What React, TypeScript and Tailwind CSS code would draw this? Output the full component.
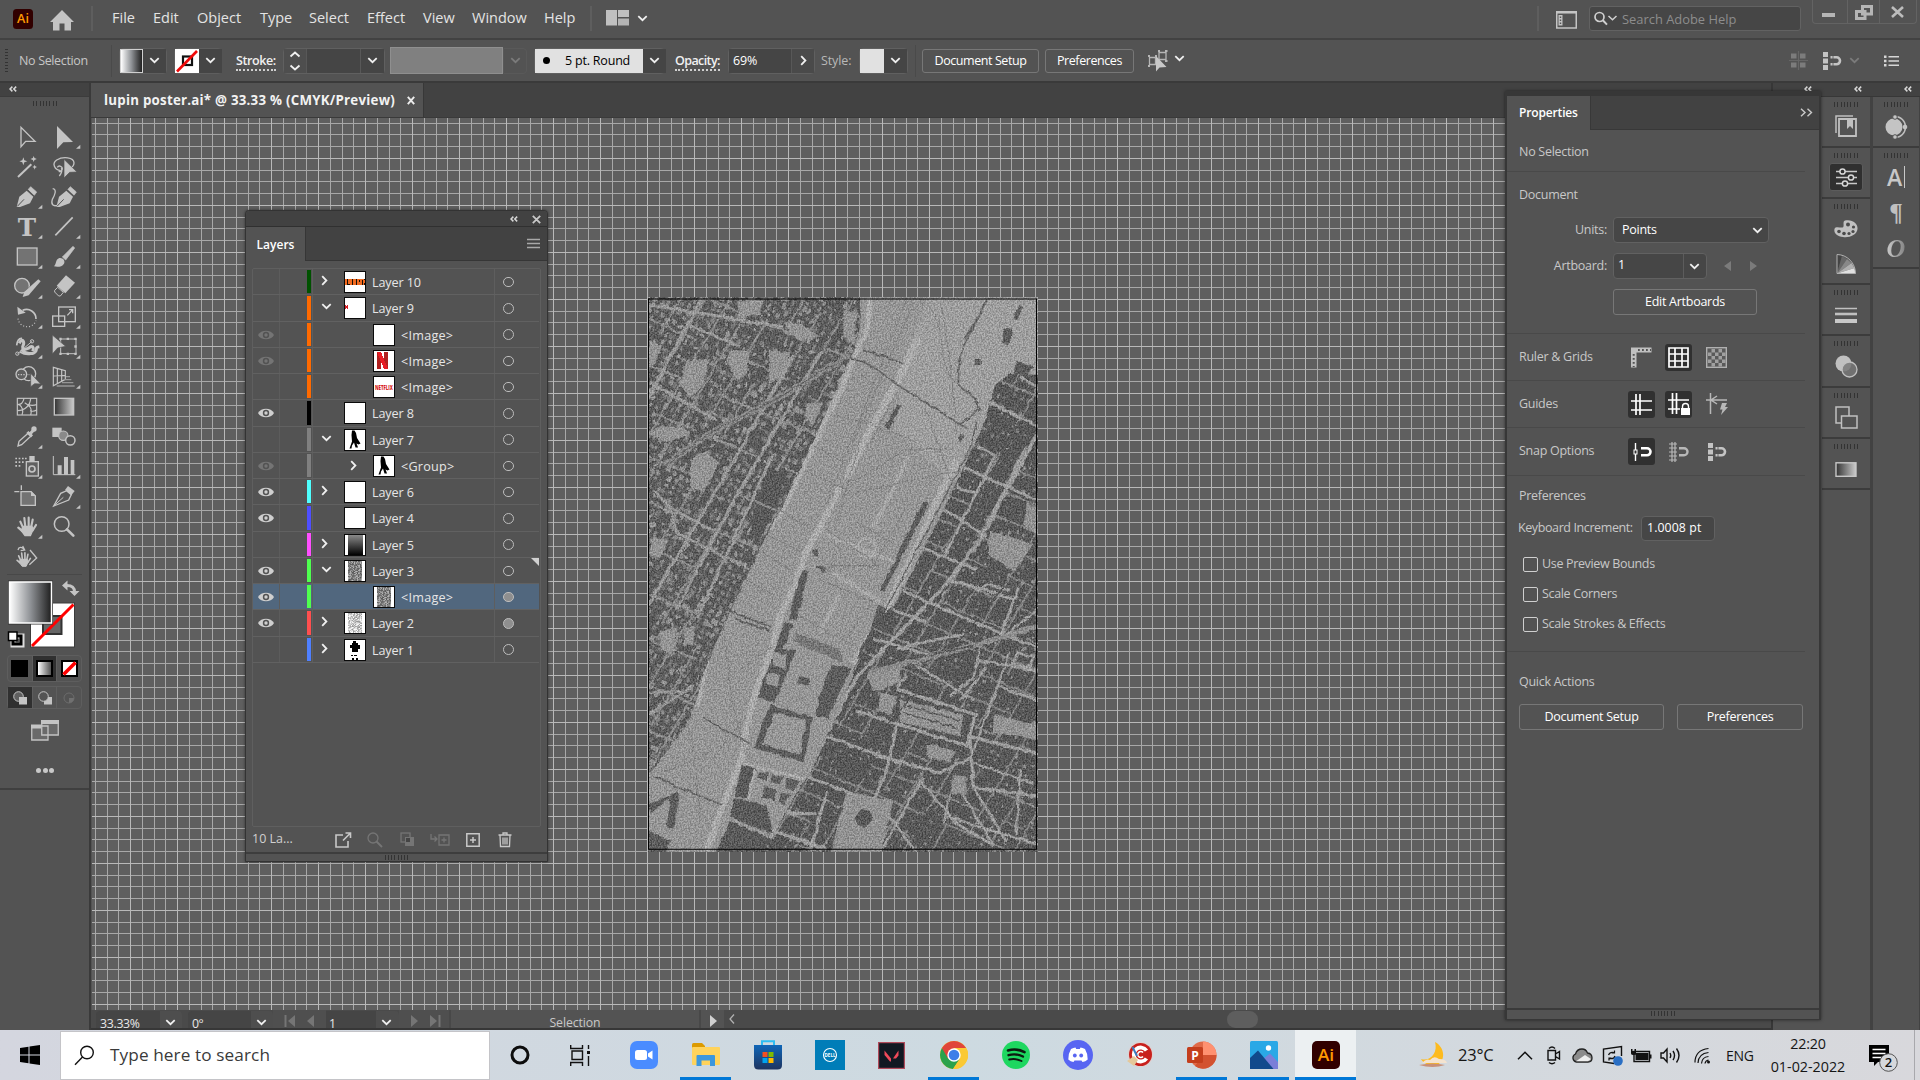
import React from 'react';

type Kids = { children?: React.ReactNode };

const UI = 'font-["Open_Sans","Noto_Sans",sans-serif]';

/* ---------- small shared pieces ---------- */

function Chev({ dim, className = '' }: { dim?: boolean; className?: string }) {
  return (
    <svg width="11" height="7" viewBox="0 0 11 7" className={`shrink-0 ${className}`}>
      <path d="M1.3 1.2 5.5 5.2 9.7 1.2" fill="none" stroke={dim ? '#7b7b7b' : '#f0f0f0'} strokeWidth="1.8" />
    </svg>
  );
}

function ChevRight({ className = '' }: { className?: string }) {
  return (
    <svg width="7" height="11" viewBox="0 0 7 11" className={`shrink-0 ${className}`}>
      <path d="M1.2 1.2 5.4 5.5 1.2 9.8" fill="none" stroke="#f0f0f0" strokeWidth="1.8" />
    </svg>
  );
}

function Grip({ n = 8 }: { n?: number }) {
  return (
    <div className="flex h-[5px] w-6 shrink-0 justify-between">
      {Array.from({ length: n }).map((_, i) => (
        <span key={i} className="w-px bg-[#333]" />
      ))}
    </div>
  );
}

function DoubleLeft({ className = '' }: { className?: string }) {
  return (
    <svg width="8" height="6" viewBox="0 0 8 6" className={className}>
      <path d="M3.400 .6 1 3l2.400 2.400M7.200 .6 4.800 3l2.400 2.400" fill="none" stroke="#d8d8d8" strokeWidth="1.500" />
    </svg>
  );
}

function DropBox({ dim }: { dim?: boolean }) {
  return (
    <div className={`flex h-full w-[23px] shrink-0 items-center justify-center ${dim ? '' : 'bg-[#454545]'}`}>
      <Chev dim={dim} />
    </div>
  );
}

function AiLogo({ size }: { size: number }) {
  return (
    <svg width={size} height={size} viewBox="0 0 28 28">
      <rect width="28" height="28" rx="5" fill="#310000" />
      <text x="14" y="20" textAnchor="middle" fontFamily="Open Sans" fontWeight="600" fontSize="17" textLength="16.500" lengthAdjust="spacingAndGlyphs" fill="#ff9a00">Ai</text>
    </svg>
  );
}

/* ---------- menu bar ---------- */

const menus: [string, string][] = [
  ['File', 'w-[41px]'], ['Edit', 'w-[44px]'], ['Object', 'w-[63px]'], ['Type', 'w-[49px]'], ['Select', 'w-[58px]'],
  ['Effect', 'w-[56px]'], ['View', 'w-[49px]'], ['Window', 'w-[72px]'], ['Help', 'w-[46px]'],
];

function MenuBar() {
  return (
    <header className="flex h-[38px] shrink-0 items-start bg-[#535353]">
      <div className="ml-[13px] mt-[9px]"><AiLogo size={20} /></div>
      <svg width="24" height="21" viewBox="0 0 24 21" className="ml-[17px] mt-[10px]">
        <path d="M12 0 24 12H21V20.500H14.500V13.500H9.500V20.500H3V12H0Z" fill="#c4c4c4" />
      </svg>
      <div className="ml-[17px] mt-1.5 h-[25px] w-[2px] bg-[#5e5e5e]" />
      <nav className="ml-[19px] mt-[7px] flex text-[14.500px] leading-[22px] text-[#e4e4e4]">
        {menus.map(([m, w]) => <span key={m} className={`${w} whitespace-nowrap`}>{m}</span>)}
      </nav>
      <div className="mt-1.5 h-[25px] w-[2px] bg-[#5e5e5e]" />
      <svg width="23" height="16" viewBox="0 0 23 16" className="ml-[14px] mt-[10px]">
        <rect width="11" height="15.500" fill="#c0c0c0" /><rect x="12" width="11" height="7" fill="#c0c0c0" /><rect x="12" y="8.500" width="11" height="7" fill="#b4b4b4" />
      </svg>
      <Chev className="ml-[8px] mt-[15px]" />
      <div className="grow" />
      <div className="mt-1.5 h-[25px] w-[2px] bg-[#5e5e5e]" />
      <svg width="21" height="18" viewBox="0 0 21 18" className="ml-[17px] mt-[11px]">
        <path d="M.75 1.500H20.250V17H.75Z" fill="none" stroke="#c4c4c4" strokeWidth="1.500" /><path d="M0 1.200H21" stroke="#c4c4c4" strokeWidth="2.400" />
        <rect x="2.500" y="4" width="4" height="10.500" fill="#c4c4c4" /><path d="M4.500 5.500v7.500" stroke="#555" strokeWidth="1.400" strokeDasharray="1.500 1.500" />
      </svg>
      <div className="ml-3 mt-1.5 flex h-[25px] w-[212px] items-center rounded-[3px] border border-[#626262] bg-[#464646] pl-1">
        <svg width="24" height="16" viewBox="0 0 24 16">
          <circle cx="5.500" cy="6" r="4.500" fill="none" stroke="#cfcfcf" strokeWidth="1.700" /><path d="M8.800 9.300 13 13.600" stroke="#cfcfcf" strokeWidth="2" />
          <path d="M14.500 5l4 3.700L22.500 5" fill="none" stroke="#cfcfcf" strokeWidth="1.500" />
        </svg>
        <span className="ml-[4px] pt-[2px] text-[12.900px] text-[#8d8d8d]">Search Adobe Help</span>
      </div>
      <div className="ml-[11px] mr-[3px] flex h-6 w-[105px] divide-x divide-[#636363] rounded-b border border-t-0 border-[#636363]">
        <div className="flex-1 pl-[9px] pt-[13px]"><div className="h-1 w-[13px] bg-[#b5b5b5]" /></div>
        <div className="flex-1 pl-[7px] pt-[5px]">
          <svg width="18" height="15" viewBox="0 0 18 15"><path d="M7.500 1.500h9v7.500h-9zM1.500 6.500h8.500v7H1.500z" fill="#535353" stroke="#b5b5b5" strokeWidth="3" /></svg>
        </div>
        <div className="flex-1 pl-[11px] pt-[6px]">
          <svg width="13" height="12" viewBox="0 0 13 12"><path d="M1 1 12 11M12 1 1 11" stroke="#bdbdbd" strokeWidth="2.600" /></svg>
        </div>
      </div>
    </header>
  );
}

/* ---------- control bar ---------- */

function ControlBar() {
  return (
    <div className="flex h-[43px] shrink-0 items-center border-t-2 border-[#424242] bg-[#535353] text-[12.500px]">
      <div className="ml-[5px] flex h-6 w-[3px] flex-col justify-between">{Array.from({ length: 8 }).map((_, i) => <span key={i} className="h-px bg-[#333]" />)}</div>
      <span className="ml-[11px] w-[92px] whitespace-nowrap pt-[2px] tracking-[-0.35px] text-[#c6c6c6]">No Selection</span>
      <div className="h-8 w-px bg-[#4a4a4a]" />
      <div className="ml-[7px] flex h-[26px] w-[48px] rounded border border-[#5e5e5e]">
        <div className="w-[25px] border border-[#d0d0d0] bg-linear-to-r from-white via-[#8f9296] to-[#222]" /><DropBox />
      </div>
      <div className="ml-[7px] flex h-[26px] w-[48px] rounded border border-[#5e5e5e]">
        <svg width="24" height="24" viewBox="0 0 24 24" className="shrink-0">
          <rect width="24" height="24" fill="#fff" /><rect x="8" y="7.500" width="9" height="8.500" fill="none" stroke="#111" strokeWidth="2.200" /><path d="M2 22.500 22 2" stroke="#f00a0a" strokeWidth="2.600" />
        </svg><DropBox />
      </div>
      <span className="ml-[14px] w-[47px] pt-[2px] tracking-[-0.4px]"><span className="border-b-2 border-dotted border-[#d0d0d0] font-semibold leading-none text-[#f0f0f0]">Stroke:</span></span>
      <div className="flex h-[26px] w-[102px] rounded border border-[#606060]">
        <svg width="22" height="24" viewBox="0 0 22 24" className="shrink-0 bg-[#4e4e4e]"><path d="M6.500 7.500 11 3.500l4.500 4M6.500 16.500 11 20.500l4.500-4" fill="none" stroke="#f0f0f0" strokeWidth="1.800" /></svg>
        <div className="w-[56px] border-x border-[#585858] bg-[#454545]" /><DropBox />
      </div>
      <div className="ml-[5px] h-[27px] w-[113px] border border-[#8f8f8f] bg-[#808080]" />
      <div className="flex h-[26px] w-6 items-center justify-center rounded-r border border-[#595959]"><Chev dim /></div>
      <div className="ml-[7px] flex h-[26px] w-[131px] rounded border border-[#606060]">
        <div className="flex w-[108px] shrink-0 items-center bg-[#e1e1e1] text-black"><span className="ml-[8px] size-[7px] rounded-full bg-black" /><span className="ml-[15px] whitespace-nowrap pt-[2px] tracking-[-0.2px]">5 pt. Round</span></div><DropBox />
      </div>
      <span className="ml-[10px] w-[53px] pt-[2px] tracking-[-0.6px]"><span className="border-b-2 border-dotted border-[#d0d0d0] font-semibold leading-none text-[#f0f0f0]">Opacity:</span></span>
      <div className="flex h-[26px] w-[87px] rounded border border-[#606060]">
        <div className="flex w-[63px] items-center border-r border-[#585858] bg-[#454545] pl-1 pt-[2px] tracking-[-0.2px] text-white">69%</div>
        <div className="flex w-[22px] items-center justify-center bg-[#4a4a4a]"><ChevRight /></div>
      </div>
      <span className="ml-[6px] w-[38px] pt-px tracking-[-0.1px] text-[#b8b8b8]">Style:</span>
      <div className="flex h-[26px] w-[49px] rounded border border-[#606060]"><div className="w-6 shrink-0 bg-[#e1e1e1]" /><DropBox /></div>
      <div className="ml-[7px] h-8 w-px bg-[#4a4a4a]" />
      <Button className="ml-[6px] h-6 w-[117px] pt-px tracking-[-0.42px]">Document Setup</Button>
      <Button className="ml-[6px] h-6 w-[89px] pt-px tracking-[-0.42px]">Preferences</Button>
      <svg width="22" height="22" viewBox="0 0 22 22" className="ml-[13px]">
        <path d="M2.500 7.500h6v7h-6zM12 2.500h7v7h-7z" fill="none" stroke="#b5b5b5" strokeWidth="1.300" />
        <path d="M1 6h2M1 16h2M8 6h2M11 1h2M18 1h2.500M18 11h2.500" stroke="#b5b5b5" strokeWidth="1.800" />
        <path d="M9 6V21.500L12.500 17.500 19.500 17Z" fill="#c8c8c8" />
      </svg>
      <Chev className="-mt-1 ml-[5px]" />
      <div className="grow" />
      <svg width="19" height="19" viewBox="0 0 19 19"><path d="M9.500 0v19M0 9.500h19" stroke="#666" strokeWidth="1.200" /><g fill="#7c7c7c"><rect x="2" y="2.500" width="5.500" height="5" /><rect x="11" y="2.500" width="5.500" height="5" /><rect x="2" y="11.500" width="5.500" height="5" /><rect x="11" y="11.500" width="5.500" height="5" /></g></svg>
      <MagnetDots className="ml-[14px]" />
      <Chev dim className="ml-[7px]" />
      <svg width="15" height="12" viewBox="0 0 15 12" className="ml-[24px] mr-[21px]"><g stroke="#d6d6d6"><path d="M4.500 1.800H15M4.500 6H15M4.500 10.200H15" strokeWidth="1.500" /><path d="M0 1.800h2.500M0 6h2.500M0 10.200h2.500" strokeWidth="2.600" /></g></svg>
    </div>
  );
}

function Button({ children, className = '' }: Kids & { className?: string }) {
  return <button className={`flex items-center justify-center whitespace-nowrap rounded-[3px] border border-[#777] font-medium text-white ${className}`}>{children}</button>;
}

function MagnetDots({ className = '' }: { className?: string }) {
  return (
    <svg width="20" height="20" viewBox="0 0 20 20" className={className}>
      <g fill="#c4c4c4"><rect x="1" y="1" width="5" height="5" /><rect x="1" y="7.500" width="5" height="5" /><rect x="1" y="14" width="5" height="5" /></g>
      <path d="M8.500 6.300H14.500a3.500 3.500 0 0 1 0 7H8.500" fill="none" stroke="#c4c4c4" strokeWidth="2.600" /><path d="M11 4.500v3.500M11 12v3.500" stroke="#535353" strokeWidth=".8" />
    </svg>
  );
}

/* ---------- tools ---------- */

const C = '#c4c4c4';
const D = '#535353';
const line = { fill: 'none', stroke: C, strokeWidth: 4 } as const;

const Hand = ({ x, y, s = 1 }: { x: number; y: number; s?: number }) => (
  <g transform={`translate(${x} ${y}) scale(${s})`} stroke={C} fill={C} strokeLinecap="round" strokeLinejoin="round">
    <path d="M-20-14-11 6M-8-25-5 2M5-26 5 2M17-20 12 4M27-4 17 12" strokeWidth="6.500" />
    <path d="M-26 4-14 14" strokeWidth="7" />
    <path d="M-12 0H15L18 10 10 28H-6L-17 13Z" strokeWidth="4" />
  </g>
);

/* Each glyph is drawn on a sheet with 90-unit rows and 114-unit columns. */
const tools: [React.ReactNode, boolean, React.ReactNode | null, boolean][] = [
  [<path d="M63 142V200L77 184H105Z" {...line} />, false, <path d="M171 138V207L190 187 219 186Z" fill={C} />, true],
  [
    <g fill={C}><path d="M54 291 94 253" stroke={C} strokeWidth="6" /><path d="M70 232l3 9 9 3-9 3-3 9-3-9-9-3 9-3zM101 228l2.500 6 7 3-7 3-2.500 6-2.500-6-7-3 7-3zM104 254l2 5 5 2-5 2-2 6-2-6-5-2 5-2z" /></g>, false,
    <g><path d="M182 272C163 270 155 250 170 240 190 228 221 232 222 248 222 256 216 262 210 265M172 262a8 8 0 1 1 4 12M184 264c4 8 0 16-6 24" {...line} /><path d="M192 238V294L209 277 231 276Z" fill={C} stroke={D} strokeWidth="2" /></g>, false,
  ],
  [
    <g fill={C}><path d="M50 381 58 350 80 332 100 350 90 370 60 381Z" /><path d="M92 320 110 336 103 346 84 329Z" stroke={C} strokeWidth="2" strokeLinejoin="round" /><path d="M52 379 72 358" stroke={D} strokeWidth="3" /><path d="M82 328 102 348" stroke={D} strokeWidth="2.500" /></g>, true,
    <g fill={C}><path d="M158 326C172 328 164 346 157 358 152 374 160 380 172 376" {...line} /><path d="M169 381 177 350 199 332 219 350 209 370 179 381Z" /><path d="M211 320 229 336 222 346 203 329Z" stroke={C} strokeWidth="2" /><path d="M171 379 191 358" stroke={D} strokeWidth="3" /><path d="M201 328 221 348" stroke={D} strokeWidth="2.500" /></g>, false,
  ],
  [<text x="81" y="467" textAnchor="middle" fontFamily="DejaVu Serif" fontWeight="700" fontSize="74" fill={C}>T</text>, true, <path d="M166 466 218 412" {...line} strokeWidth={5} />, true],
  [<rect x="52" y="504" width="59" height="51" {...line} fill="#737373" />, true, <g fill={C}><path d="M219 499 224 504 197 540 187 531Z" stroke={C} strokeWidth="2" /><path d="M162 559C170 552 166 538 178 534 188 532 197 542 192 551 186 561 172 562 162 559Z" /></g>, true],
  [
    <g><circle cx="66" cy="617" r="22" {...line} fill="#737373" /><path d="M119 602 79 640" stroke={D} strokeWidth="16" /><path d="M115 598 122 604 86 646 68 651 73 635Z" fill={C} /></g>, true,
    <g><path d="M198 586 225 608 196 640 170 617Z" fill={C} /><path d="M173 622 190 637 181 648H176L164 636V631Z" {...line} strokeWidth={3} /></g>, true,
  ],
  [
    <g><path d="M68 691A28 28 0 0 1 108 717" {...line} strokeWidth={5} /><path d="M52 680 54 704 77 698Z" fill={C} /><path d="M54 716A28 28 0 0 0 108 722" {...line} strokeDasharray="3 6" strokeWidth={3.5} /></g>, true,
    <g {...line}><rect x="176" y="681" width="50" height="44" /><rect x="158" y="708" width="36" height="31" /><path d="M202 706 218 689M207 689H218V700" /></g>, true,
  ],
  [
    <g><path d="M58 790C66 772 76 784 68 800 66 816 88 804 92 800 100 798 102 806 98 814M64 808C74 822 100 826 108 812 112 804 104 802 118 800" {...line} strokeWidth={9} /><path d="M52 822 96 784" {...line} strokeWidth={3} /><circle cx="52" cy="821" r="5" {...line} strokeWidth={3} /><circle cx="96" cy="784" r="5" {...line} strokeWidth={3} /><path d="M50 796C52 780 58 774 66 775M60 816c20 12 40 8 50-4" {...line} strokeWidth={5} /></g>, true,
    <g><rect x="182" y="777" width="46" height="44" {...line} strokeWidth={3} /><g fill={C}><path d="M178 773h7v7h-7zM200 773h7v7h-7zM223 773h7v7h-7zM223 796h7v7h-7zM223 818h7v7h-7zM200 818h7v7h-7zM178 818h7v7h-7z" /><path d="M157 765V822L173 804 197 799Z" stroke={D} strokeWidth="2" /></g></g>, true,
  ],
  [
    <g><circle cx="86" cy="881" r="21" {...line} /><circle cx="64" cy="883" r="16" {...line} fill="#5f5f5f" /><path d="M54 884H88" {...line} strokeDasharray="4 4" /><path d="M92 880V920L104 911 122 912Z" fill={C} stroke={D} strokeWidth="2" /></g>, true,
    <g><path d="M160 862V917L196 898V872ZM160 888 196 886M172 866V910M185 869V903" {...line} strokeWidth={3.5} /><path d="M198 890h12M192 899h22M186 908h34M170 918h54" stroke="#969696" strokeWidth="4" /></g>, true,
  ],
  [
    <g><rect x="52" y="955" width="58" height="50" {...line} strokeWidth={3.5} /><path d="M52 974C66 974 70 966 72 955M52 992C76 990 90 978 92 955M66 1005C72 990 66 980 56 972M92 1005C98 984 88 976 74 968M84 974C96 978 104 976 110 974M90 992C100 996 104 994 110 990" {...line} strokeWidth={3.5} /></g>, false,
    <g><rect x="163" y="955" width="58" height="50" fill="url(#toolGrad)" stroke={C} strokeWidth="4" /></g>, false,
  ],
  [
    <g><path d="M54 78 57 64 86 38 94 47 65 74Z" {...line} /><path d="M82 36 96 49M90 42 104 26" stroke={C} strokeWidth="9" /><circle cx="102" cy="27" r="8" fill={C} /></g>, true,
    <g><rect x="157" y="23" width="28" height="28" fill={C} /><circle cx="190" cy="47" r="14" fill="#8a8a8a" stroke={C} strokeWidth="3.500" /><circle cx="211" cy="61" r="14" fill={D} stroke={C} strokeWidth="4.500" /></g>, false,
  ],
  [
    <g fill={C}><path d="M46 113h5v5h-5zM56 113h5v5h-5zM66 113h5v5h-5zM75 113h5v5h-5zM46 124h5v5h-5zM56 124h5v5h-5zM66 124h5v5h-5zM46 135h5v5h-5zM56 135h5v5h-5z" /><path d="M88 108H104V124H88Z" /><rect x="79" y="125" width="36" height="43" {...line} fill="#606060" /><circle cx="96" cy="147" r="9" {...line} strokeWidth={5} /></g>, true,
    <g fill={C}><path d="M160 108V164H226" {...line} strokeWidth={3} /><path d="M173 136h12v28h-12zM192 111h12v53h-12zM212 120h11v44h-11z" /></g>, true,
  ],
  [
    <g><path d="M43 215H58M64 196V210" {...line} /><path d="M63 215H93L106 228V256H63Z" {...line} fill="#737373" /><path d="M93 213 108 228H93Z" fill={C} /></g>, false,
    <g><path d="M161 258 182 220 200 212 214 224 206 240Z" {...line} /><path d="M204 198 224 213 214 226 195 210Z" fill={C} /><path d="M161 258 190 232" {...line} strokeWidth={3} /></g>, true,
  ],
  [<Hand x={81} y={319} />, true, <g><circle cx="185" cy="312" r="22" {...line} strokeWidth={4.5} /><path d="M201 328 220 347" stroke={C} strokeWidth="8" strokeLinecap="round" /></g>, false],
  [<g><Hand x={71} y={418} s={0.75} /><path d="M90 390 110 414 88 434M54 390C56 380 66 380 72 388M68 378 74 390 62 392" {...line} strokeWidth={4} /></g>, false, null, false],
];

function ToolCell({ r, c, glyph, more }: { r: number; c: number; glyph: React.ReactNode; more: boolean }) {
  const x = 24 + 114 * c;
  const y = 126 + 90 * r - (r > 9 ? 1020 : 0);
  return (
    <svg width="38" height="30" viewBox={`${x} ${y} 114 90`}>
      {glyph}
      {more && <path d={`M${x + 103} ${y + 68}v12h-13z`} fill={C} />}
    </svg>
  );
}

function ToolPanel() {
  return (
    <aside className="flex w-[91px] shrink-0 flex-col border-r-2 border-[#3a3a3a] bg-[#535353]">
      <div className="h-[14px] border-b border-[#3c3c3c] bg-[#424242] pl-[9px] pt-[3px]"><DoubleLeft /></div>
      <div className="flex flex-1 flex-col">
        <div className="ml-[33px] mt-[4px]"><Grip /></div>
        <svg width="0" height="0"><defs><linearGradient id="toolGrad"><stop offset="0" stopColor="#333" /><stop offset="1" stopColor="#ccc" /></linearGradient></defs></svg>
        <div className="ml-2 mt-[16px] grid w-[76px] grid-cols-2">
          {tools.map(([a, am, b, bm], r) => (
            <React.Fragment key={r}>
              <ToolCell r={r} c={0} glyph={a} more={am} />
              {b ? <ToolCell r={r} c={1} glyph={b} more={bm} /> : <span />}
            </React.Fragment>
          ))}
        </div>
        <div className="ml-[7px] mt-[2px] h-px w-[75px] bg-[#484848]" />
        <svg width="75" height="72" viewBox="0 0 75 72" className="ml-[7px] mt-[3px]">
          <defs><linearGradient id="fillGrad"><stop offset="0" stopColor="#fff" /><stop offset=".5" stopColor="#8f9296" /><stop offset="1" stopColor="#1e1e1e" /></linearGradient></defs>
          <rect x="23.500" y="25" width="44" height="44" fill="#fff" stroke="#3c3c3c" /><rect x="36" y="38" width="18.500" height="18" fill="#666" stroke="#333" strokeWidth="2" />
          <path d="M25 68 66.500 26.500" stroke="#f00" strokeWidth="3" />
          <rect x="1" y="2.500" width="45" height="44" fill="#333" /><rect x="2.500" y="4" width="42" height="41" fill="url(#fillGrad)" stroke="#fff" strokeWidth="1.500" />
          <path d="M58.500 7.500C65.500 7 67.500 10 67.500 14" fill="none" stroke={C} strokeWidth="3" /><path d="M55 7.500 60.500 2.500V12.500ZM62.500 13H72.500L67.500 18Z" fill={C} />
          <rect x="6" y="58" width="9" height="9" fill="none" stroke="#ddd" strokeWidth="5" /><rect x="6" y="58" width="8" height="8" fill="none" stroke="#000" strokeWidth="3" /><rect x="1.500" y="54" width="8.500" height="8.500" fill="#fff" stroke="#000" strokeWidth="1.500" />
        </svg>
        <div className="ml-[7px] mt-[5px] flex h-[27px] w-[75px] divide-x divide-[#5e5e5e] rounded border border-[#5e5e5e]">
          <div className="flex flex-1 items-center justify-center"><div className="size-[17px] bg-black" /></div>
          <div className="flex flex-1 items-center justify-center bg-[#303030]"><div className="size-[17px] border-2 border-black bg-linear-to-r from-white to-[#555]" /></div>
          <div className="flex flex-1 items-center justify-center"><svg width="17" height="17" viewBox="0 0 17 17"><rect x="1" y="1" width="15" height="15" fill="#fff" stroke="#000" strokeWidth="2" /><path d="M2.500 14.500 14.500 2.500" stroke="#f00" strokeWidth="3.600" /></svg></div>
        </div>
        <div className="ml-[7px] mt-[4px] flex h-[23px] w-[75px] divide-x divide-[#5e5e5e] rounded border border-[#5e5e5e]">
          <div className="flex flex-1 items-center justify-center bg-[#303030]"><svg width="14" height="14" viewBox="0 0 14 14"><circle cx="5.500" cy="5.500" r="4.800" fill="#606060" stroke={C} /><rect x="6" y="6" width="8" height="7.500" fill={C} /></svg></div>
          <div className="flex flex-1 items-center justify-center"><svg width="14" height="14" viewBox="0 0 14 14"><rect x="6" y="6" width="8" height="7.500" fill={C} /><circle cx="5.500" cy="5.500" r="4.800" fill={D} stroke={C} /></svg></div>
          <div className="flex flex-1 items-center justify-center"><svg width="12" height="12" viewBox="0 0 12 12"><circle cx="6" cy="6" r="5" fill="none" stroke="#6c6c6c" /><path d="M6 6H11A5 5 0 0 1 6 11Z" fill="#707070" /></svg></div>
        </div>
        <svg width="28" height="21" viewBox="0 0 28 21" className="ml-[31px] mt-[11px]"><path d="M.75 6H17V20H.75ZM10.750 1H27.250V15H10.750Z" fill="#6a6a6a" stroke={C} strokeWidth="1.300" /><path d="M0 6.500H10M10 2H28" stroke={C} strokeWidth="4" /></svg>
        <div className="ml-[36px] mt-[27px] flex gap-[1.500px]"><span className="size-[5px] rounded-full bg-[#c8c8c8]" /><span className="size-[5px] rounded-full bg-[#c8c8c8]" /><span className="size-[5px] rounded-full bg-[#c8c8c8]" /></div>
        <div className="mt-[15px] h-[2px] bg-[#3f3f3f]" />
      </div>
    </aside>
  );
}

/* ---------- artwork on the canvas ---------- */

function makeRng(seed: number) {
  let s = seed;
  return () => {
    s = (s * 1664525 + 1013904223) >>> 0;
    return s / 4294967296;
  };
}

const WEST = 'M20 20H660L662 90 640 170 585 280 520 420 430 590 350 725 270 885 205 1010 180 1095 145 1190 20 1335Z';
const EAST = 'M1195 235 1110 232 1066 262 1050 310 1030 380 995 440 920 590 850 715 765 870 715 905 655 1030 600 1150 545 1265 500 1345 440 1425 385 1505 350 1550H1195Z';

function buildings(seed: number, x0: number, x1: number, y0: number, y1: number, density: number, size: number, pitch: number) {
  const rnd = makeRng(seed);
  const out: React.ReactNode[] = [];
  for (let v = -1600; v < 1900; v += pitch) {
    for (let u = -1600; u < 1900; u += pitch) {
      const px = 500 + u * 0.52 + v * 0.9 + (rnd() - 0.5) * 10;
      const py = 800 - u * 0.85 + v * 0.42 + (rnd() - 0.5) * 10;
      const keep = rnd();
      const w = size * (0.6 + rnd());
      const h = size * (0.6 + rnd() * 1.3);
      const g = Math.floor(112 + rnd() * 46);
      if (px < x0 || px > x1 || py < y0 || py > y1 || keep > density) continue;
      out.push(<rect key={`${u},${v}`} x={px - w / 2} y={py - h / 2} width={w} height={h} rx="2" fill={`rgb(${g},${g},${g})`} transform={`rotate(${keep > 0.15 ? 27 : 70} ${px} ${py})`} />);
    }
  }
  return out;
}

/* Broken parallel streets running along the river and across it. */
function streets(seed: number, ox: number, oy: number, along: number, across: number, cover: number) {
  const rnd = makeRng(seed);
  let d = '';
  for (let i = -14; i <= 14; i++) {
    for (let j = -16; j <= 16; j++) {
      const bx = ox + i * along * 0.85 + j * 90 * 0.54;
      const by = oy + i * along * 0.42 - j * 90 * 0.84;
      if (rnd() < cover) d += `M${bx.toFixed(1)} ${by.toFixed(1)}l48.600-75.600`;
      const cx = ox + i * 70 * 0.93 + j * across * 0.54;
      const cy = oy + i * 70 * 0.36 - j * across * 0.84;
      if (rnd() < cover) d += `M${cx.toFixed(1)} ${cy.toFixed(1)}l65 25.200`;
    }
  }
  return d;
}

const westBlocks = buildings(7, 20, 660, 20, 1330, 0.9, 9.5, 20);
const eastBlocks = buildings(21, 360, 1195, 240, 1550, 0.62, 5.5, 21);
const westStreets = streets(3, 300, 440, 66, 120, 0.72);
const eastStreets = streets(12, 900, 860, 74, 72, 0.6);

function MapArt() {
  return (
    <svg width="390" height="555" viewBox="24 21 1170 1527" preserveAspectRatio="none" className="absolute left-[556px] top-[179px]">
      <defs>
        <clipPath id="west"><path d={WEST} /></clipPath>
        <clipPath id="east"><path d={EAST} /></clipPath>
        <filter id="grain" x="0" y="0" width="100%" height="100%" colorInterpolationFilters="sRGB">
          <feTurbulence type="fractalNoise" baseFrequency=".22" numOctaves="2" seed="4" />
          <feColorMatrix values="2.400 0 0 0 -.68  2.400 0 0 0 -.68  2.400 0 0 0 -.68  0 0 0 0 .2" />
        </filter>
        <filter id="ink" x="0" y="0" width="100%" height="100%" colorInterpolationFilters="sRGB">
          <feTurbulence type="fractalNoise" baseFrequency=".05" numOctaves="2" seed="9" result="n" />
          <feDisplacementMap in="SourceGraphic" in2="n" scale="12" xChannelSelector="R" yChannelSelector="G" />
          <feGaussianBlur stdDeviation="1.300" />
        </filter>
      </defs>
      <rect x="24" y="21" width="1170" height="1527" fill="#9a9a9a" />
      <g filter="url(#ink)">
        <rect x="10" y="10" width="1200" height="1550" fill="#9a9a9a" />
        {/* gardens and embankment */}
        <path d="M860 20H1200V235L1110 232 1066 262 1030 380 940 540 900 500 760 380 800 200Z" fill="#a4a4a4" />
        <g fill="none" stroke="#b4b4b4">
          <path d="M690 26 682 110 640 190 600 280 520 430 430 600 390 660" strokeWidth="16" />
          <path d="M835 130 780 240 700 370 640 480 620 520" strokeWidth="22" />
          <path d="M600 545 560 620 500 720 470 800 420 900 395 990 350 1100 325 1180 305 1290 240 1440 200 1545" strokeWidth="18" />
          <path d="M805 460 700 660M560 675 760 750M720 860 580 780M600 840 540 940" strokeWidth="12" stroke="#adadad" />
          <path d="M950 470 880 600 840 690 760 840 740 880 640 1030" strokeWidth="20" />
          <path d="M250 890 215 970 185 1090 170 1150" strokeWidth="14" />
        </g>
        <circle cx="680" cy="710" r="26" fill="none" stroke="#adadad" strokeWidth="8" />
        <g fill="none" stroke="#5c5c5c">
          <path d="M652 26C668 90 650 140 622 190C540 340 440 560 270 880C230 960 180 1060 172 1110C150 1180 90 1260 26 1330" strokeWidth="7" />
          <path d="M600 188C680 190 720 225 770 262L980 382M670 165 790 205M1045 26 975 135M1025 60C960 170 955 180 955 262L1005 300 1020 330 960 370" strokeWidth="5" />
          <path d="M1010 365 990 440 640 1050" strokeWidth="4" />
          <path d="M270 885 395 930M284 905 390 940M190 1180 330 1250M40 1340 250 1420" strokeWidth="5" />
        </g>
        <g fill="none" stroke="#7c7c7c" strokeWidth="2.500">
          <path d="M800 26 560 590M820 40 640 420M860 40C930 100 880 200 950 260M905 50 930 200 950 400M855 330 940 540M940 440 800 440 620 540M700 375 830 420M520 430 620 480M660 230 700 260M590 350 700 370M500 500 640 560M420 610 520 660M390 680 480 720M360 720 450 770M660 420 590 640M560 660 720 760 560 760M320 800 400 840M250 930 275 1130 320 1290M130 1140 160 1260 180 1450M300 1050 400 980M320 1170 210 1300M70 1330 220 1270M480 900 640 980M620 960 700 860M640 560 960 500M700 760 800 600M760 300 690 420M600 700 560 780M650 640 760 700M540 800 700 860" />
        </g>
        {/* palace wings and pavilions */}
        <g fill="#535353">
          <path d="M770 316 784 320 746 384 736 380Z" /><path d="M850 584 866 590 732 832 720 828Z" />
          <path d="M715 868 738 878 674 1014 648 1016 690 940Z" /><path d="M485 772 506 776 470 910 446 908 460 850Z" /><path d="M435 915 458 920 430 990 468 992 405 1138 352 1122Z" />
          <path d="M390 1140 412 1148 364 1252 480 1280 500 1180 518 1184 490 1302 342 1262Z" /><path d="M400 1148 520 1176 516 1190 396 1160Z" /><path d="M572 1034 634 1040 562 1180 528 1176 540 1110Z" />
          <path d="M478 1064 510 1068 504 1090 474 1084Z" /><path d="M1094 108 1120 112 1108 150 1086 148ZM1134 44 1148 48 1132 84 1120 80Z" /><path d="M1128 194 1180 214 1150 250 1118 246Z" />
          <path d="M530 758 560 768 556 778 528 768ZM518 714 534 716 532 732 516 728ZM960 398 972 402 966 420 956 418ZM1004 194h18v14h-18z" />
          <path d="M466 944 600 990 606 1026 466 972Z" opacity=".55" /><path d="M20 1420 110 1384 120 1390 100 1484 80 1480 90 1400 30 1440ZM20 1490 90 1516 80 1555H20Z" />
        </g>
        <path d="M400 1000 440 1004 436 1044 398 1034ZM386 1052 420 1060 412 1096 376 1086Z" fill="#999" />

        <g clipPath="url(#west)">
          <rect x="10" y="10" width="670" height="1340" fill="#515151" />
          {westBlocks}
          <g fill="#979797">
            <path d="M140 196 210 190 190 260 150 300 120 260ZM270 166 330 170 320 230 290 250 262 200ZM386 168 450 172 440 230 390 260ZM150 470 200 444 236 480 190 560 150 540ZM60 376 130 380 150 400 80 420 30 400ZM500 310 550 314 520 370 496 360ZM60 940 110 930 100 1000 64 996ZM130 926 164 930 160 980 132 976ZM430 90 480 94 540 130 470 140ZM290 30 370 30 360 70 300 80ZM26 140 66 156 50 200 26 210ZM40 680 84 690 60 740 26 730ZM610 60 650 60 640 150 610 130Z" />
          </g>
          <g fill="#4f4f4f"><path d="M390 490 440 510 400 620 350 700 330 640ZM540 30 612 36 606 130 574 160 520 150 590 120 596 60Z" /></g>
          <g fill="none" stroke="#9e9e9e" strokeWidth="7">
            <path d={westStreets} strokeWidth="6" opacity=".8" />
            <path d="M26 42 430 104M150 100 300 156M184 26 26 300M460 180 300 440 26 868M545 168 270 600 110 880M400 450 172 905M26 255 230 360" strokeWidth="9" />
            <path d="M40 550 90 600 110 670 330 770M80 595 210 660M26 1170 160 1090M26 1110 140 1105" />
            <path d="M75 484 200 400 420 296 610 190" stroke="#8a8a8a" strokeWidth="16" /><path d="M75 484 200 400 420 296 610 190" stroke="#5a5a5a" strokeWidth="3" />
          </g>
        </g>

        <g clipPath="url(#east)">
          <rect x="340" y="230" width="870" height="1330" fill="#4d4d4d" />
          {eastBlocks}
          <g fill="#959595">
            <path d="M1050 664 1180 700 1124 776 1046 730ZM1160 590 1200 600V680L1150 650ZM780 1130 970 1170 960 1230 780 1190ZM940 1336 980 1340 976 1390 930 1390ZM620 1380 760 1410 720 1555H570ZM680 1060 780 1030 780 1080 700 1110ZM720 1110 776 1120 750 1170 716 1160ZM860 1250 950 1270 930 1300 860 1290ZM1060 1170 1200 1200V1240L1060 1220Z" />
          </g>
          <g fill="none" stroke="#a4a4a4" strokeWidth="8">
            <path d={eastStreets} strokeWidth="5.500" opacity=".65" />
            <path d="M1190 400 1020 690 910 820 650 1066 550 1240 390 1510" strokeWidth="10" />
            <path d="M1140 240 1200 275M1050 310 1200 380M1160 430 1035 660M1010 432 1065 456 910 740M960 485 1200 584M950 545 1010 560M905 600 1040 680M850 712 1010 770M790 830 1090 950 1200 985M930 800 1120 850M1020 830 1040 810 1110 830M1135 820 1080 960M760 880 860 915M700 960 880 1010M770 990 850 970 980 948" />
            <path d="M690 1055 1000 980 1200 925" strokeWidth="14" stroke="#8e8e8e" />
            <path d="M820 1030 1000 1130M1020 985 1000 1070 930 1120M1110 1000 1000 1270M1070 1090 1190 1130M1015 1020 1190 1050M1190 880 1100 950M1130 1000 1180 1010 1170 1040 1120 1030ZM1040 1040 960 1130" strokeWidth="7" />
            <path d="M770 1100 1006 1170 980 1256 650 1160M1200 1280 990 1230 1000 1370 1200 1395M800 1060 770 1096M560 1230 740 1290 900 1330 990 1290M770 1200 740 1320 700 1410M500 1340 640 1390M440 1440 530 1444M560 1380 510 1550M400 1490 560 1540" strokeWidth="9" />
            <path d="M850 1340 720 1550M840 1350 950 1470 1060 1530M970 1390 1060 1530M1000 1370 1100 1520M1140 1320 1130 1500M990 1300 1180 1360M740 1440 830 1550M920 1450 1200 1530M930 1390 910 1470" strokeWidth="7" />
          </g>
          <g fill="none" stroke="#4a4a4a" strokeWidth="4"><path d="M1000 980 800 1020M1090 820 930 1000M850 1090 560 1370M800 1146 960 1186M790 1166 950 1206M806 1126 962 1166M700 970 640 1066" /></g>
          <circle cx="672" cy="1454" r="30" fill="#4d4d4d" stroke="#989898" strokeWidth="10" />
          <path d="M572 1034 634 1040 562 1180 528 1176 540 1110Z" fill="#4d4d4d" />
        </g>

        {/* blocks between the river bend and the southern quarter */}
        <path d="M305 1310 350 1318 322 1400 284 1396ZM284 1400 380 1420 396 1500 270 1450ZM270 1462 390 1510 350 1555H225Z" fill="#505050" />
        <path d="M356 1326 384 1330 380 1350 352 1346ZM396 1334 430 1342 418 1362 392 1354ZM440 1344 478 1352 460 1380 436 1372ZM372 1366 412 1378 404 1408 366 1398ZM424 1384 448 1390 430 1418 416 1410Z" fill="#585858" />
        <path d="M310 1305 490 1345M345 1320 325 1400" fill="none" stroke="#b0b0b0" strokeWidth="8" />
      </g>
      <rect x="24" y="21" width="1170" height="1527" filter="url(#grain)" />
      <path d="M25.500 26.500H1189.500V1540.500H25.500Z" fill="none" stroke="#000" strokeWidth="3" />
    </svg>
  );
}

function Canvas() {
  return (
    <div className="relative flex-1 overflow-hidden bg-[#5f5f5f]">
      <svg width="100%" height="100%" shapeRendering="crispEdges" className="block">
        <defs>
          <pattern id="grid" x="38" y="40" width="47" height="47" patternUnits="userSpaceOnUse">
            <path d="M12 0h1v47h-1zM24 0h1v47h-1zM35 0h1v47h-1zM0 12h47v1H0zM0 23h47v1H0zM0 35h47v1H0z" fill="#a8a8a8" />
            <path d="M0 0h1v47H0zM0 0h47v1H0z" fill="#b9b9b9" />
          </pattern>
        </defs>
        <rect width="100%" height="100%" fill="url(#grid)" />
      </svg>
      <MapArt />
      <LayersPanel />
    </div>
  );
}

/* ---------- layers panel ---------- */

type Layer = { name: string; color: string; eye?: 'on' | 'dim'; open?: 'r' | 'd'; child?: boolean; thumb: string; sel?: boolean; target?: boolean };

const layers: Layer[] = [
  { name: 'Layer 10', color: 'bg-[#005200]', open: 'r', thumb: 'title' },
  { name: 'Layer 9', color: 'bg-[#ff6a00]', open: 'd', thumb: 'mini' },
  { name: '<Image>', color: 'bg-[#ff6a00]', eye: 'dim', child: true, thumb: 'blank' },
  { name: '<Image>', color: 'bg-[#ff6a00]', eye: 'dim', child: true, thumb: 'n' },
  { name: '<Image>', color: 'bg-[#ff6a00]', child: true, thumb: 'netflix' },
  { name: 'Layer 8', color: 'bg-black', eye: 'on', thumb: 'blank' },
  { name: 'Layer 7', color: 'bg-[#808080]', open: 'd', thumb: 'figure' },
  { name: '<Group>', color: 'bg-[#808080]', eye: 'dim', open: 'r', child: true, thumb: 'figure' },
  { name: 'Layer 6', color: 'bg-[#4ffffe]', eye: 'on', open: 'r', thumb: 'blank' },
  { name: 'Layer 4', color: 'bg-[#4f4fff]', eye: 'on', thumb: 'blank' },
  { name: 'Layer 5', color: 'bg-[#ff4fff]', open: 'r', thumb: 'fade' },
  { name: 'Layer 3', color: 'bg-[#4fff4f]', eye: 'on', open: 'd', thumb: 'noise' },
  { name: '<Image>', color: 'bg-[#4fff4f]', eye: 'on', child: true, thumb: 'noise', sel: true, target: true },
  { name: 'Layer 2', color: 'bg-[#ff4f4f]', eye: 'on', open: 'r', thumb: 'speckle', target: true },
  { name: 'Layer 1', color: 'bg-[#4f80ff]', open: 'r', thumb: 'bust' },
];

function Speckle({ seed, x, w, lo, hi }: { seed: number; x: number; w: number; lo: number; hi: number }) {
  const rnd = makeRng(seed);
  return (
    <>
      {Array.from({ length: w * 20 }).map((_, i) => {
        const g = Math.floor(lo + rnd() * (hi - lo));
        return <rect key={i} x={x + (i % w)} y={1 + Math.floor(i / w)} width="1" height="1" fill={`rgb(${g},${g},${g})`} />;
      })}
    </>
  );
}

function Thumb({ kind }: { kind: string }) {
  return (
    <svg width="22" height="22" viewBox="0 0 22 22" shapeRendering={kind === 'figure' || kind === 'netflix' ? 'auto' : 'crispEdges'} className="shrink-0 overflow-visible">
      <rect x=".5" y=".5" width="21" height="21" fill="#fff" />
      {kind === 'title' && <g><rect x="1" y="8" width="20" height="6" fill="#f26b21" /><path d="M3 8h1v5h2v1H3zM8 8h1v6H8zM12 8h1v6h-1zM15 9h1v2h-1zM18 9h1v5h-1zM20 8h1v1h-1zM20 12h1v2h-1z" fill="#1a1208" /></g>}
      {kind === 'mini' && <path d="M1 8h1v4H1zM3 8h1v4H3zM2 9h1v2H2z" fill="#d81f26" />}
      {kind === 'n' && <g><path d="M4 2h4v17H4zM11 2h4v17h-4z" fill="#b1201f" /><path d="M4 2h4l7 17h-4z" fill="#e81c24" /></g>}
      {kind === 'netflix' && <text x="11" y="13.800" textAnchor="middle" fontFamily="Open Sans" fontSize="7" fontWeight="800" textLength="18" lengthAdjust="spacingAndGlyphs" fill="#d81f26">NETFLIX</text>}
      {kind === 'figure' && <path d="M8 1.500H10.500L12 4 13 9 16.500 14.500 14.500 15.500 12.500 14.500 13.500 17 14 18.500H11.500L10 13.500 8 16.500 7.500 19.500H5.500L8 12.500 7.500 6Z" fill="#000" />}
      {kind === 'fade' && <rect x="4" y="1" width="15" height="20" fill="url(#fadeGrad)" />}
      {kind === 'noise' && <Speckle seed={5} x={4} w={14} lo={85} hi={185} />}
      {kind === 'speckle' && <Speckle seed={11} x={4} w={14} lo={150} hi={255} />}
      {kind === 'bust' && <path d="M9 2h3v2h2v2h2v4h-2v3H8V9H6V6h2V4h1zM7 16h2v1H7zM10 16h3v1h-3zM8 19h2v2H8zM12 19h2v2h-2z" fill="#000" />}
      <rect x=".5" y=".5" width="21" height="21" fill="none" stroke="#0a0a0a" />
    </svg>
  );
}

function Eye({ dim }: { dim?: boolean }) {
  return (
    <svg width="16" height="10" viewBox="0 0 16 10">
      <path d="M0 5C3-.8 13-.8 16 5 13 10.800 3 10.800 0 5Z" fill={dim ? '#747474' : '#cfcfcf'} /><circle cx="8" cy="5" r="3.200" fill="#535353" /><circle cx="8" cy="5" r="1.700" fill={dim ? '#747474' : '#cfcfcf'} />
    </svg>
  );
}

function LayerRow({ l }: { l: Layer }) {
  return (
    <div className={`relative flex h-[26.250px] items-stretch border-b border-[#616161] ${l.sel ? 'bg-[#51677e]' : ''}`}>
      <div className="flex w-[27px] items-center justify-center border-r border-[#5c5c5c] pt-px">{l.eye && <Eye dim={l.eye === 'dim'} />}</div>
      <div className="w-[27px]" />
      <div className={`my-px w-1 ${l.color}`} />
      <div className="w-[2px] border-r border-[#5e5e5e]" />
      <div className={`flex items-center ${l.child ? 'w-[60px] pl-[38px]' : 'w-[31px] pl-[8px]'}`}>
        {l.open === 'r' && <ChevRight className={l.child ? '-ml-[1px]' : '-mt-[2px]'} />}
        {l.open === 'd' && <Chev className="-mt-[2px]" />}
      </div>
      <div className="flex items-center pt-px"><Thumb kind={l.thumb} /></div>
      <span className={`ml-[6px] grow whitespace-nowrap text-[12.600px] leading-[27px] text-[#e6e6e6] ${l.child ? 'tracking-[0.25px]' : 'tracking-[-0.1px]'}`}>{l.name}</span>
      <div className="flex w-[45px] items-center border-l border-[#5e5e5e] pl-[8px] pt-px"><span className={`size-[10.500px] rounded-full border-[1.500px] border-[#bdbdbd] ${l.target ? 'bg-[#8f8f8f]' : ''}`} /></div>
      {l.name === 'Layer 3' && <svg width="8" height="8" className="absolute right-0 top-0"><path d="M0 0H8V8Z" fill="#d0d0d0" /></svg>}
    </div>
  );
}

function LayersPanel() {
  const ic = { fill: 'none', stroke: '#c8c8c8', strokeWidth: 1.3 } as const;
  const dimIc = { fill: 'none', stroke: '#757575', strokeWidth: 1.3 } as const;
  return (
    <section className="absolute left-[153px] top-[92px] flex h-[652px] w-[303px] flex-col rounded-t-[4px] border border-[#333] bg-[#535353] shadow-[0_0_3px_rgba(0,0,0,.5)]">
      <svg width="0" height="0" className="absolute"><defs><linearGradient id="fadeGrad" x2="0" y2="1"><stop offset="0" stopColor="#8a8a8a" /><stop offset="1" stopColor="#000" /></linearGradient></defs></svg>
      <div className="flex h-[16px] shrink-0 items-center justify-end rounded-t-[4px] border-b border-[#303030] bg-[#424242]">
        <DoubleLeft className="mr-[14px]" />
        <svg width="9" height="9" viewBox="0 0 9 9" className="mr-[6px] mt-px"><path d="M.8.8 8.200 8.200M8.200.8.8 8.200" stroke="#c8c8c8" strokeWidth="1.800" /></svg>
      </div>
      <div className="flex h-[34px] shrink-0 bg-[#424242]">
        <div className="flex w-[59px] items-center justify-center bg-[#535353] pt-px text-[12px] font-semibold text-white">Layers</div>
        <div className="flex grow items-center justify-end border-b border-l border-[#363636] pr-[7px]">
          <svg width="13" height="11" viewBox="0 0 13 11"><path d="M0 1.500H13M0 5.500H13M0 9.500H13" stroke="#a8a8a8" strokeWidth="1.300" /></svg>
        </div>
      </div>
      <div className="mx-[6px] mt-[7px] h-[559px] shrink-0 rounded-[2px] border border-[#5f5f5f] pr-px">
        {layers.map((l, i) => <LayerRow key={i} l={l} />)}
      </div>
      <div className="flex h-[25px] shrink-0 items-center pl-[6px]">
        <span className="w-[83px] text-[12.500px] text-[#d0d0d0]">10 La...</span>
        <svg width="17" height="16" viewBox="0 0 17 16"><path d="M8 3H1V15H13V9M8 8.500 15 1.500M10.500 1H15.500V6" {...ic} strokeWidth={1.6} /></svg>
        <svg width="16" height="16" viewBox="0 0 16 16" className="ml-[15px]"><circle cx="6" cy="6" r="5" {...dimIc} /><path d="M9.500 9.500 15 15" stroke="#757575" strokeWidth="2" /></svg>
        <svg width="15" height="15" viewBox="0 0 15 15" className="ml-[17px]"><rect x="1" y="1" width="9" height="9" {...dimIc} /><path d="M5 5H14V14H5Z" fill="#757575" /><rect x="6" y="6" width="4" height="4" fill="#444" /></svg>
        <svg width="20" height="15" viewBox="0 0 20 15" className="ml-[15px]"><path d="M1 2V7H7M4.500 4.500 7 7 4.500 9.500M9 3H19V13H9ZM14 5.500V10.500M11.500 8H16.500" {...dimIc} /></svg>
        <svg width="14" height="14" viewBox="0 0 14 14" className="ml-[16px]"><path d="M.8.8H13.200V13.200H.8ZM7 4V10M4 7H10" {...ic} strokeWidth={1.5} /></svg>
        <svg width="14" height="16" viewBox="0 0 14 16" className="ml-[18px]"><path d="M.5 3H13.500M5 3V1H9V3M2 3 2.500 14.500H11.500L12 3M5 5.500V12.500M7 5.500V12.500M9 5.500V12.500" {...ic} /></svg>
      </div>
      <div className="flex grow justify-center border-t-2 border-[#3d3d3d] pt-px"><Grip /></div>
    </section>
  );
}

/* ---------- status bar ---------- */

function StatusBar() {
  const tri = '#757575';
  return (
    <div className="flex h-5 shrink-0 items-stretch border-b-2 border-[#373737] bg-[#4a4a4a] text-[12.300px] leading-[25px] tracking-[-0.3px] text-[#e8e8e8]">
      <div className="ml-[5px] mt-px w-[64px] rounded-tl bg-[#454545] pl-[4px]">33.33%</div>
      <div className="mt-px w-[22px] rounded-tr bg-[#4e4e4e] pl-[5px] pt-[8px]"><Chev /></div>
      <div className="ml-1.5 mt-px w-[63px] rounded-tl bg-[#454545] pl-[4px]">0º</div>
      <div className="mt-px w-[22px] rounded-tr bg-[#4e4e4e] pl-[5px] pt-[8px]"><Chev /></div>
      <div className="flex w-[53px] items-end gap-[11px] bg-[#4f4f4f] pb-px pl-[11px]">
        <svg width="12" height="12" viewBox="0 0 12 12"><path d="M1.500 0V12" stroke={tri} strokeWidth="2" /><path d="M11 0V12L4 6Z" fill={tri} /></svg>
        <svg width="7" height="12" viewBox="0 0 7 12"><path d="M7 0V12L0 6Z" fill={tri} /></svg>
      </div>
      <div className="mt-px w-[50px] bg-[#454545] pl-[3px]">1</div>
      <div className="mt-px w-[23px] rounded-tr bg-[#4e4e4e] pl-[5px] pt-[8px]"><Chev /></div>
      <div className="flex w-[52px] items-end gap-[11px] border-r-2 border-[#484848] bg-[#4f4f4f] pb-px pl-[12px]">
        <svg width="7" height="12" viewBox="0 0 7 12"><path d="M0 0V12L7 6Z" fill={tri} /></svg>
        <svg width="12" height="12" viewBox="0 0 12 12"><path d="M10.500 0V12" stroke={tri} strokeWidth="2" /><path d="M1 0V12L8 6Z" fill={tri} /></svg>
      </div>
      <div className="w-[250px] border-r-2 border-[#484848] bg-[#535353] text-center tracking-[-0.1px] text-[#c8c8c8]">Selection</div>
      <div className="flex w-[23px] items-end bg-[#535353] pb-px pl-[9px]"><svg width="7" height="12" viewBox="0 0 7 12"><path d="M0 0V12L7 6Z" fill="#d0d0d0" /></svg></div>
      <div className="flex grow">
        <svg width="6" height="10" viewBox="0 0 6 10" className="ml-[5px] mt-[4px]"><path d="M5 .5 1 5 5 9.500" fill="none" stroke="#b0b0b0" strokeWidth="1.300" /></svg>
        <div className="ml-[492px] mt-px h-[17px] w-[31px] rounded-[9px] bg-[#5e5e5e]" />
      </div>
    </div>
  );
}

/* ---------- properties panel ---------- */

function Rule({ className = '' }: { className?: string }) {
  return <div className={`h-px w-[298px] shrink-0 bg-[#494949] ${className}`} />;
}

function IconBox({ on, children, className = '' }: Kids & { on?: boolean; className?: string }) {
  return <div className={`flex size-[27px] items-center justify-center rounded-[3px] ${on ? 'bg-[#303030]' : ''} ${className}`}>{children}</div>;
}

function PropertiesPanel() {
  const w = { fill: 'none', stroke: '#fff', strokeWidth: 1.4 } as const;
  return (
    <section className="absolute right-[99px] top-[8px] flex h-[929px] w-[316px] flex-col border-2 border-b border-[#373737] bg-[#535353] text-[12.500px] tracking-[-0.27px] text-[#c8c8c8] shadow-[0_0_3px_rgba(0,0,0,.5)]">
      <div className="h-[3px] shrink-0 bg-[#373737]" />
      <div className="flex h-[34px] shrink-0 bg-[#424242]">
        <div className="flex w-[83px] items-center bg-[#535353] pl-[12px] text-[12px] font-semibold tracking-[-0.15px] text-white">Properties</div>
        <div className="flex grow items-center justify-end border-b border-l border-[#383838] pr-[6px]">
          <svg width="13" height="9" viewBox="0 0 13 9"><path d="M1 .7 5 4.500 1 8.300M7.500.7 11.500 4.500 7.500 8.300" fill="none" stroke="#cacaca" strokeWidth="1.400" /></svg>
        </div>
      </div>
      <div className="flex h-[41px] shrink-0 items-center pl-3 pt-1">No Selection</div>
      <Rule />
      <div className="flex h-[45px] shrink-0 items-center pl-3 pt-[2px]">Document</div>
      <div className="flex h-[26px] shrink-0 items-center">
        <span className="w-[100px] text-right">Units:</span>
        <div className="ml-[6px] flex h-[26px] w-[156px] items-center justify-between rounded border border-[#616161] bg-[#464646] pl-2 pr-[5px] text-white">Points<Chev /></div>
      </div>
      <div className="mt-[10px] flex h-[26px] shrink-0 items-center">
        <span className="w-[100px] text-right">Artboard:</span>
        <div className="ml-[6px] flex h-[26px] w-[94px] items-stretch rounded border border-[#616161] bg-[#464646] text-white">
          <span className="w-[70px] border-r border-[#5c5c5c] pl-1 leading-[22px]">1</span><span className="flex grow items-center justify-center pr-px"><Chev /></span>
        </div>
        <svg width="34" height="12" viewBox="0 0 34 12" className="ml-[16px]"><path d="M8 1V11L1 6ZM27 1V11L34 6Z" fill="#7b7b7b" /></svg>
      </div>
      <Button className="ml-[106px] mt-[10px] h-[26px] w-[144px] shrink-0">Edit Artboards</Button>
      <Rule className="mt-[18px]" />
      <div className="flex h-[46px] shrink-0 items-center pl-3">
        <span className="w-[109px]">Ruler &amp; Grids</span>
        <IconBox><svg width="21" height="21" viewBox="0 0 21 21"><path d="M0 .5H20.500V5.500H5.500V20.500H0Z" fill="#c0c0c0" /><path d="M7 3H20M2.700 7V20" stroke="#535353" strokeWidth="2" strokeDasharray="1.800 2.200" /></svg></IconBox>
        <IconBox on className="ml-[10px]"><svg width="21" height="21" viewBox="0 0 21 21"><path d="M1 1H20V20H1ZM7 1V20M14 1V20M1 7H20M1 14H20" {...w} strokeWidth={1.700} /></svg></IconBox>
        <IconBox className="ml-[11px]"><svg width="21" height="21" viewBox="0 0 21 21"><rect x=".7" y=".7" width="19.600" height="19.600" fill="#5a5a5a" stroke="#b0b0b0" strokeWidth="1.400" />{Array.from({ length: 25 }).map((_, i) => i % 2 === 1 && <rect key={i} x={2 + (i % 5) * 3.5} y={2 + Math.floor(i / 5) * 3.5} width="3.500" height="3.500" fill="#a0a0a0" />)}</svg></IconBox>
      </div>
      <Rule />
      <div className="flex h-[46px] shrink-0 items-center pl-3">
        <span className="w-[109px]">Guides</span>
        <IconBox on><svg width="21" height="21" viewBox="0 0 21 21"><path d="M5 0V21M9 0V21M0 7H21M0 16H21" {...w} strokeWidth={1.700} /></svg></IconBox>
        <IconBox on className="ml-[10px]"><svg width="22" height="22" viewBox="0 0 22 22"><path d="M4.500 0V21M8.500 0V21M0 7H21M0 16H13" {...w} strokeWidth={1.700} /><rect x="12" y="10" width="11" height="12" fill="#303030" /><path d="M13 15H22V22H13Z" fill="#fff" /><path d="M14.500 15V13.500a3 3 0 0 1 6 0V15" {...w} /></svg></IconBox>
        <IconBox className="ml-[11px]"><svg width="22" height="22" viewBox="0 0 22 22"><path d="M0 7H21M4.500 0V21M11 3 5 7 11 11" fill="none" stroke="#b8b8b8" strokeWidth="1.500" /><path d="M16 10H21L19 14H22L15 22 16.500 16.500H14Z" fill="#b8b8b8" /></svg></IconBox>
      </div>
      <Rule />
      <div className="flex h-[47px] shrink-0 items-center pl-3">
        <span className="w-[109px]">Snap Options</span>
        <IconBox on><svg width="20" height="20" viewBox="0 0 20 20"><path d="M3.500 1V19" {...w} /><rect x="2" y="8" width="3" height="4" fill="#303030" stroke="#fff" /><path d="M9 6.300H15a3.500 3.500 0 0 1 0 7H9" {...w} strokeWidth={2.600} /></svg></IconBox>
        <IconBox className="ml-[10px]"><svg width="20" height="20" viewBox="0 0 20 20"><path d="M3 0V20M6 0V20M0 2H8M0 6H8M0 10H8M0 14H8M0 18H8" stroke="#b8b8b8" strokeWidth="1.200" /><path d="M10 6.300H15a3.500 3.500 0 0 1 0 7H10" fill="none" stroke="#b8b8b8" strokeWidth="2.400" /></svg></IconBox>
        <IconBox className="ml-[11px]"><MagnetDots /></IconBox>
      </div>
      <Rule />
      <div className="flex h-[40px] shrink-0 items-center pl-3">Preferences</div>
      <div className="flex h-[25px] shrink-0 items-center pl-[11px]">
        <span className="w-[123px] whitespace-nowrap tracking-[-0.4px]">Keyboard Increment:</span>
        <div className="flex h-[25px] w-[74px] items-center rounded border border-[#616161] bg-[#464646] pl-[5px] text-[12.300px] tracking-[0.1px] text-white">1.0008 pt</div>
      </div>
      <div className="mt-[15px] flex shrink-0 flex-col gap-[14px] pl-[16px]">
        {['Use Preview Bounds', 'Scale Corners', 'Scale Strokes & Effects'].map((t) => (
          <label key={t} className="flex h-4 items-center gap-[4px] whitespace-nowrap tracking-[-0.34px]"><span className="size-[15px] rounded-[2px] border border-[#cfcfcf]" />{t}</label>
        ))}
      </div>
      <Rule className="mt-[19px]" />
      <div className="mt-[8px] flex h-[44px] shrink-0 items-center pl-3">Quick Actions</div>
      <div className="flex shrink-0 gap-[13px] pl-3">
        <Button className="h-[26px] w-[145px]">Document Setup</Button>
        <Button className="h-[26px] w-[126px]">Preferences</Button>
      </div>
      <div className="mt-auto flex h-[11px] shrink-0 justify-center border-t-2 border-[#3a3a3a] pt-px"><Grip /></div>
    </section>
  );
}

/* ---------- docks ---------- */

function DockGroup({ children, className = '' }: Kids & { className?: string }) {
  return (
    <div className={`flex shrink-0 flex-col items-center border-b-2 border-[#3c3c3c] pt-[5px] ${className}`}><Grip />{children}</div>
  );
}

function Docks() {
  const s = { fill: 'none', stroke: '#c0c0c0', strokeWidth: 1.5 } as const;
  return (
    <div className="flex w-[149px] shrink-0 flex-col border-l-2 border-[#373737] bg-[#535353]">
      <div className="flex h-[14px] shrink-0 border-b border-[#373737] bg-[#424242] pt-[3px]">
        <DoubleLeft className="ml-[31px]" /><DoubleLeft className="ml-[42px]" /><DoubleLeft className="ml-[42px]" />
      </div>
      <div className="flex grow">
        <div className="w-[49px]" />
        <div className="flex w-[51px] flex-col border-r-3 border-[#424242]">
          <DockGroup className="h-[51px]">
            <svg width="22" height="22" viewBox="0 0 22 22" className="mt-[8px]"><path d="M4 4H21V21H4Z" {...s} strokeWidth={1.8} /><path d="M1 18V1H18" {...s} /><path d="M12 4H18V14L15 11 12 14Z" fill="#c0c0c0" /></svg>
          </DockGroup>
          <DockGroup className="h-[51px]">
            <div className="mt-[5px] flex h-[28px] w-[34px] shrink-0 items-center justify-center rounded-[3px] border border-[#5c5c5c] bg-[#303030]">
              <svg width="21" height="19" viewBox="0 0 21 19"><path d="M0 3.500H21M0 9.500H21M0 15.500H21" stroke="#c8c8c8" strokeWidth="1.500" /><g fill="#303030" stroke="#d8d8d8" strokeWidth="1.500"><circle cx="6.500" cy="3.500" r="2.600" /><circle cx="15" cy="9.500" r="2.600" /><circle cx="9" cy="15.500" r="2.600" /></g></svg>
            </div>
          </DockGroup>
          <DockGroup className="h-[86px]">
            <svg width="24" height="18" viewBox="0 0 24 18" className="mt-[11px]"><path d="M11 .5C19-1 24 4 23.500 9 23 15 15 18 9 17 3 16.500-.5 13 .5 9 1.500 6 6 8 8.500 7.500 11 7 8 1.500 11 .5Z" fill="#c0c0c0" /><g fill="#4a4a4a"><circle cx="14" cy="4.500" r="2" /><circle cx="19.500" cy="7" r="1.600" /><circle cx="19" cy="11.500" r="1.600" /><circle cx="5" cy="11.500" r="1.800" /><circle cx="10" cy="13.500" r="1.800" /><circle cx="15" cy="13.500" r="1.600" /></g></svg>
            <svg width="20" height="20" viewBox="0 0 20 20" className="mt-[16px]"><path d="M1 .5V19.500L6 2Z" fill="#444" /><path d="M6 2 1 19.500 11 5Z" fill="#666" /><path d="M11 5 1 19.500 15.500 9Z" fill="#888" /><path d="M15.500 9 1 19.500 18.500 14Z" fill="#b0b0b0" /><path d="M18.500 14 1 19.500H19.500Z" fill="#e0e0e0" /><path d="M1 .5C11 .5 19.500 9 19.500 19.500H1Z" fill="none" stroke="#b0b0b0" /></svg>
          </DockGroup>
          <DockGroup className="h-[51px]"><svg width="22" height="17" viewBox="0 0 22 17" className="mt-[12px]"><path d="M0 1.500H22" stroke="#c0c0c0" strokeWidth="1.500" /><path d="M0 7H22" stroke="#c0c0c0" strokeWidth="2.600" /><path d="M0 14H22" stroke="#c8c8c8" strokeWidth="4" /></svg></DockGroup>
          <DockGroup className="h-[52px]"><svg width="23" height="23" viewBox="0 0 23 23" className="mt-[9px]"><circle cx="8.500" cy="8.500" r="8" fill="#c0c0c0" /><circle cx="14.500" cy="14.500" r="7.500" fill="#777" fillOpacity=".85" stroke="#c0c0c0" strokeWidth="1.300" /></svg></DockGroup>
          <DockGroup className="h-[51px]"><svg width="23" height="23" viewBox="0 0 23 23" className="mt-[8px]"><path d="M1 1H14V17H1Z" {...s} /><path d="M6.500 10H22V22H6.500Z" {...s} fill="#535353" /></svg></DockGroup>
          <DockGroup className="h-[51px]"><svg width="22" height="15" viewBox="0 0 22 15" className="mt-[13px]"><rect x="1" y=".8" width="20" height="13.500" fill="url(#toolGrad)" stroke="#c8c8c8" strokeWidth="1.400" /></svg></DockGroup>
        </div>
        <div className="flex grow flex-col border-r border-[#424242]">
          <DockGroup className="h-[51px]"><svg width="23" height="24" viewBox="0 0 23 24" className="mt-[8px]"><circle cx="9" cy="12" r="8.500" fill="#c4c4c4" /><path d="M10 1.500A10.500 10.500 0 0 1 10 22.500" {...s} /><circle cx="10" cy="2" r="2.300" fill="#c4c4c4" stroke="#535353" /><circle cx="20" cy="12" r="2.300" fill="#c4c4c4" /><circle cx="10" cy="22" r="2.300" fill="#c4c4c4" stroke="#535353" /></svg></DockGroup>
          <DockGroup className="h-[121px]">
            <div className="mt-[6px] flex h-[26px] shrink-0 items-center gap-[2px] text-[23px] font-semibold leading-none text-[#c8c8c8]">A<span className="h-[22px] w-px bg-[#c8c8c8]" /></div>
            <div className="mt-[10px] font-['Liberation_Serif',serif] text-[25px] font-bold leading-[26px] text-[#c0c0c0]">¶</div>
            <div className="mt-[9px] bg-linear-to-r from-[#d8d8d8] to-[#777] bg-clip-text px-1 font-['Liberation_Serif',serif] text-[26px] font-bold italic leading-[28px] text-transparent">O</div>
          </DockGroup>
        </div>
      </div>
    </div>
  );
}

/* ---------- taskbar ---------- */

function TaskApp({ children, run, className = 'w-[51px]' }: Kids & { run?: boolean; className?: string }) {
  return (
    <div className={`flex h-[50px] shrink-0 items-center justify-center ${run ? 'border-b-3 border-[#0078d7] pt-[3px]' : ''} ${className}`}>{children}</div>
  );
}

function Taskbar() {
  const k = { fill: 'none', stroke: '#111', strokeWidth: 1.4 } as const;
  return (
    <footer className="flex h-[50px] shrink-0 items-center bg-linear-to-r from-[#d4d6df] via-[#cddae1] to-[#d8d8dc] text-[#151515]">
      <svg width="20" height="20" viewBox="0 0 20 20" className="ml-5"><path d="M0 3 8.500 1.700V9.500H0ZM9.500 1.500 20 0V9.500H9.500ZM0 10.500H8.500V18.300L0 17ZM9.500 10.500H20V20L9.500 18.500Z" fill="#000" /></svg>
      <div className="ml-[20px] flex h-[49px] w-[430px] items-center border border-[#c4c4c8] bg-white pl-[13px]">
        <svg width="21" height="21" viewBox="0 0 21 21"><circle cx="13" cy="7.500" r="6.300" {...k} /><path d="M8.500 12 1 19.800" {...k} /></svg>
        <span className="ml-[15px] text-[17.200px] tracking-[0.1px] text-[#3a3a3a]">Type here to search</span>
      </div>
      <svg width="20" height="20" viewBox="0 0 20 20" className="ml-5"><circle cx="10" cy="10" r="8" fill="none" stroke="#0c0c0c" strokeWidth="3" /></svg>
      <svg width="20" height="21" viewBox="0 0 20 21" className="ml-[40px]"><path d="M.7 0V3.500H12.500V0M.7 21V17.500H12.500V21M2 6H12.500V14.500H2ZM18.500 0V4M18.500 11V21" {...k} /><rect x="17" y="6" width="3" height="3" fill="#111" /></svg>
      <div className="ml-[28px] flex">
        <TaskApp>
          <svg width="28" height="28" viewBox="0 0 28 28"><rect width="28" height="28" rx="7" fill="#4a8cff" /><rect x="5" y="9" width="12" height="10" rx="2.500" fill="#fff" /><path d="M18 12.500 22.500 9.500V18.500L18 15.500Z" fill="#fff" /></svg>
        </TaskApp>
      </div>
      <div className="ml-[11px] flex grow gap-[11px]">
        <TaskApp run><svg width="28" height="24" viewBox="0 0 28 24"><path d="M0 1.500Q0 0 1.500 0H10L13 3V7H0Z" fill="#dc9a00" /><rect x="0" y="4" width="28" height="18" rx="1" fill="#ffd35c" /><path d="M4.500 23V13Q4.500 12 5.500 12H22Q23 12 23 13V23H18V17.500H9.500V23Z" fill="#3c97dd" /></svg></TaskApp>
        <TaskApp><svg width="30" height="30" viewBox="0 0 30 30"><defs><linearGradient id="store" x2="0" y2="1"><stop stopColor="#0f66b8" /><stop offset="1" stopColor="#1e3460" /></linearGradient></defs><path d="M9 5V1.200H21V5" fill="none" stroke="#2ebdf2" strokeWidth="2" /><path d="M1 5H29V25Q29 29.500 24.500 29.500H5.500Q1 29.500 1 25Z" fill="url(#store)" /><path d="M9.500 12H14.500V17H9.500Z" fill="#f25022" /><path d="M15.500 12H20.500V17H15.500Z" fill="#7fba00" /><path d="M9.500 18H14.500V23H9.500Z" fill="#00a4ef" /><path d="M15.500 18H20.500V23H15.500Z" fill="#ffb900" /></svg></TaskApp>
        <TaskApp><svg width="30" height="30" viewBox="0 0 30 30"><rect width="30" height="30" fill="#007db8" /><circle cx="15" cy="15" r="6.500" fill="none" stroke="#fff" strokeWidth="1.100" /><text x="15" y="17" textAnchor="middle" fontFamily="Open Sans" fontWeight="700" fontSize="4.500" fill="#fff">DELL</text></svg></TaskApp>
        <TaskApp><svg width="27" height="27" viewBox="0 0 27 27"><rect x=".6" y=".6" width="25.800" height="25.800" fill="#111822" stroke="#b04a5a" strokeWidth="1.200" /><path d="M6.500 8.500 13 16.500V19.500H12L6.500 13ZM20.500 8.500V13.500L18 16.500H15Z" fill="#f0495a" /></svg></TaskApp>
        <TaskApp run><svg width="28" height="28" viewBox="0 0 28 28"><circle cx="14" cy="14" r="14" fill="#fbc934" /><path d="M14 14 1.900 7A14 14 0 0 0 13 28L20 17.500Z" fill="#2ba24c" /><path d="M14 7H26.100A14 14 0 0 1 13 28L20 17.500Z" fill="#fbc934" /><path d="M14 7H26.100A14 14 0 0 0 1.900 7L8 17.500Z" fill="#e0453a" /><circle cx="14" cy="14" r="6.700" fill="#fff" /><circle cx="14" cy="14" r="5.300" fill="#3f7fe8" /></svg></TaskApp>
        <TaskApp><svg width="28" height="28" viewBox="0 0 28 28"><circle cx="14" cy="14" r="14" fill="#1ed760" /><g fill="none" stroke="#0c1a10" strokeLinecap="round"><path d="M6 9.500Q14.500 7 22.500 11.200" strokeWidth="2.600" /><path d="M6.500 14.200Q14 12 21 15.600" strokeWidth="2.300" /><path d="M7.200 18.500Q13.500 17 19.500 20" strokeWidth="1.900" /></g></svg></TaskApp>
        <TaskApp><svg width="30" height="30" viewBox="0 0 30 30"><circle cx="15" cy="15" r="15" fill="#5865f2" /><path d="M8 9Q10.500 7.500 12.500 7.500L13.200 9H16.800L17.500 7.500Q19.500 7.500 22 9 25 14 24.700 19.500 22.500 21.500 19.500 22L18.500 20.500H11.500L10.500 22Q7.500 21.500 5.300 19.500 5 14 8 9Z" fill="#fff" /><ellipse cx="11.800" cy="15.500" rx="1.900" ry="2.100" fill="#5865f2" /><ellipse cx="18.200" cy="15.500" rx="1.900" ry="2.100" fill="#5865f2" /></svg></TaskApp>
        <TaskApp><svg width="28" height="28" viewBox="0 0 28 28"><circle cx="14.500" cy="13.500" r="12.700" fill="#ddd2d2" /><circle cx="14.500" cy="13.500" r="11.500" fill="#c8201c" /><path d="M20.500 9.500A7 7 0 1 0 20.500 17.500" fill="none" stroke="#fff" strokeWidth="3.800" /><path d="M17 11.500A3 3 0 1 0 17 15.500" fill="none" stroke="#fff" strokeWidth="1.500" /><path d="M6.500 6 11 15" stroke="#3b7dc0" strokeWidth="2" /><path d="M1 20 8 15 12 19 8 25Z" fill="#e5c89a" /></svg></TaskApp>
        <TaskApp run><svg width="30" height="28" viewBox="0 0 30 28"><circle cx="16" cy="14" r="13.500" fill="#e06a48" /><path d="M16 .5A13.500 13.500 0 0 1 29.500 14H16Z" fill="#ff9170" /><path d="M16 14H29.500A13.500 13.500 0 0 1 8 25Z" fill="#d35230" /><rect y="6" width="16" height="16" rx="1.500" fill="#c43e1c" /><text x="8" y="18.500" textAnchor="middle" fontFamily="Open Sans" fontWeight="700" fontSize="12" fill="#fff">P</text></svg></TaskApp>
        <TaskApp run><svg width="28" height="28" viewBox="0 0 28 28"><rect width="28" height="28" rx="1.500" fill="#2aa8e6" /><path d="M13 18 20 12.500 28 21V28H20Z" fill="#7a7fd8" /><path d="M0 17 8 9.500 23.500 28H0Z" fill="#114a8c" /><circle cx="18.500" cy="7" r="2.700" fill="#fff" /></svg></TaskApp>
        <TaskApp run className="-ml-[5px] w-[61px] bg-[#ecf0f2]"><AiLogo size={28} /></TaskApp>
      </div>
      <svg width="29" height="26" viewBox="0 0 29 26"><path d="M16 0C26 5 27 19 18 23 12 25 5 22 2 17 12 20 19 10 16 0Z" fill="#fdbb1f" /><path d="M3 21Q7 16 11 18 15 13 20 17 27 17 28 21Z" fill="#f4e3cf" /><path d="M0 23Q14 20 26 23 14 27 0 23Z" fill="#c99077" /></svg>
      <span className="ml-[10px] w-[60px] text-[16.500px] tracking-[-0.2px]">23°C</span>
      <svg width="16" height="9" viewBox="0 0 16 9" className="-ml-px"><path d="M1 8.200 8 1.200 15 8.200" {...k} strokeWidth={1.500} /></svg>
      <svg width="16" height="19" viewBox="0 0 16 19" className="ml-[13px]"><path d="M2 4.500H9.500V14H2ZM9.500 8 13.500 5.500V13L9.500 10.500M3 2.500Q6-.5 9 2.500M3 16.500Q6 19 9 16.500" {...k} /></svg>
      <svg width="21" height="15" viewBox="0 0 21 15" className="ml-[10px]"><path d="M4.500 14A4.200 4.200 0 0 1 3.500 6Q5 1 10 1 14 1 15.500 5 20 5.500 20 10 20 14 16 14Z" fill="#8b8b8b" stroke="#222" strokeWidth="1.300" /><path d="M4 13.300 13 7 19 11 16 13.300Z" fill="#eee" /></svg>
      <svg width="21" height="21" viewBox="0 0 21 21" className="ml-[9px]"><path d="M19.500 11V1.500L1.500 4V17L12 18.500" {...k} /><path d="M6.500 10Q8 6.500 12 7.500M12.500 5.500V8H10M13 11Q12 14.500 7.500 13.500M7 15.500V13H9.500" {...k} strokeWidth={1.200} /><circle cx="16" cy="16" r="4.800" fill="#2a6fc4" /></svg>
      <svg width="21" height="15" viewBox="0 0 21 15" className="ml-[8px]"><path d="M3 3.500H18.500V13.500H3Z" {...k} /><path d="M4.500 5H17.500V12H4.500ZM19 6.500H20.500V10.500H19ZM0 1H1.500V3H3.500V1H5V5.500Q5 7 2.500 7 0 7 0 5.500Z" fill="#111" /></svg>
      <svg width="22" height="17" viewBox="0 0 22 17" className="ml-[8px]"><path d="M1 6H3.500L7 2V15L3.500 11H1ZM10 6Q11.500 8.500 10 11M13 4Q16 8.500 13 13M16.500 1.500Q21.500 8.500 16.500 15.500" {...k} /></svg>
      <svg width="17" height="17" viewBox="0 0 17 17" className="ml-[12px]"><path d="M1 15.500Q1 3 14.500 1.500M4 16Q4.500 6.500 14.500 5.500M7.500 16.500Q8 10 14.500 9.500M11 16.500Q11.500 13.500 14.500 13" {...k} strokeWidth={1.200} /><circle cx="14.500" cy="15" r="1.500" fill="#111" /></svg>
      <span className="ml-[15px] w-[44px] text-[14px] tracking-[-0.3px]">ENG</span>
      <div className="flex w-[76px] flex-col items-center text-[14.300px] leading-[23px]"><span className="tracking-[-0.2px]">22:20</span><span className="whitespace-nowrap">01-02-2022</span></div>
      <div className="ml-[23px] h-[30px] w-[31px]">
        <svg width="31" height="32" viewBox="0 0 31 32"><path d="M0 5H20V22H9L5 26V22H0Z" fill="#000" /><path d="M3.500 9.500H16.500M3.500 13.500H16.500M3.500 17.500H12" stroke="#fff" strokeWidth="1.300" /><circle cx="19.500" cy="22.500" r="8.800" fill="#d6d8dc" stroke="#555" /><text x="19.500" y="27.300" textAnchor="middle" fontFamily="Open Sans" fontWeight="600" fontSize="13" fill="#111">2</text></svg>
      </div>
      <div className="ml-[14px] mr-[5px] h-full w-px bg-[#a8a8ac]" />
    </footer>
  );
}

/* ---------- page ---------- */

export default function App() {
  return (
    <div className={`flex h-[1080px] w-[1920px] flex-col overflow-hidden bg-[#535353] leading-normal ${UI}`}>
      <MenuBar />
      <ControlBar />
      <div className="relative flex h-[949px] shrink-0 border-t-2 border-[#3a3a3a]">
        <ToolPanel />
        <main className="flex min-w-0 grow flex-col">
          <div className="flex h-[35px] shrink-0 border-b border-[#3a3a3a] bg-[#424242]">
            <div className="flex w-[333px] items-center border-r border-[#383838] bg-[#535353] pl-[13px] text-[13.300px] font-bold text-[#f2f2f2]">
              <span className="w-[303px] whitespace-nowrap pt-px tracking-[0.24px]">lupin poster.ai* @ 33.33 % (CMYK/Preview)</span>
              <svg width="8" height="9" viewBox="0 0 8 9"><path d="M.8.8 7.200 8.200M7.200.8.8 8.200" stroke="#ececec" strokeWidth="1.900" /></svg>
            </div>
          </div>
          <div className="flex min-h-0 grow pl-px"><Canvas /></div>
          <StatusBar />
        </main>
        <Docks />
        <PropertiesPanel />
      </div>
      <Taskbar />
    </div>
  );
}
